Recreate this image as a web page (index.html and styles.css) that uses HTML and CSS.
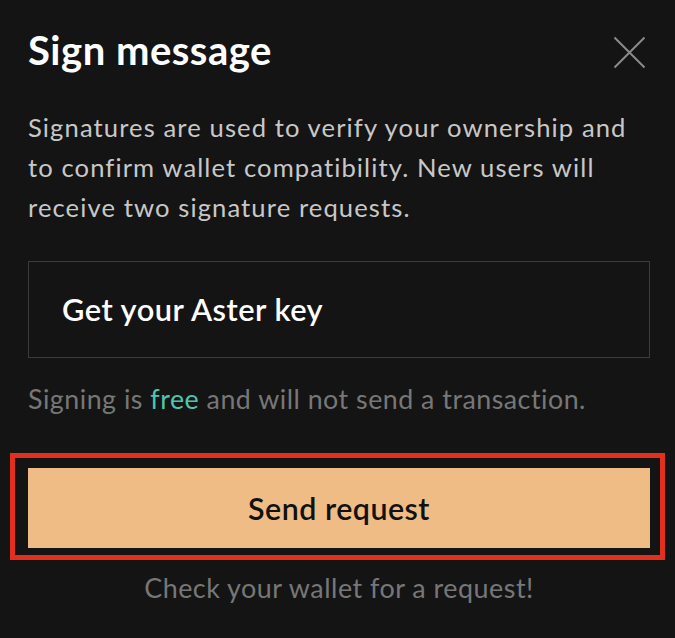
FILE: index.html
```html
<!DOCTYPE html>
<html>
<head>
<meta charset="utf-8">
<link rel="stylesheet" href="styles.css">
</head>
<body>
<div class="modal">
  <div class="header">
    <h1 class="title">Sign message</h1>
    <button class="close" aria-label="Close">
      <svg width="33" height="33" viewBox="0 0 33 33"><path d="M1.5 1.5 L31.5 31.5 M31.5 1.5 L1.5 31.5" stroke="#8a8a8a" stroke-width="2" fill="none"/></svg>
    </button>
  </div>
  <p class="desc">Signatures are used to verify your ownership and to confirm wallet compatibility. New users will receive two signature requests.</p>
  <div class="message">Get your Aster key</div>
  <p class="note">Signing is <span class="free">free</span> and will not send a transaction.</p>
  <div class="highlight">
    <button class="send">Send request</button>
  </div>
  <p class="check">Check your wallet for a request!</p>
</div>
</body>
</html>
```
FILE: styles.css
```css
html, body {
  margin: 0;
  padding: 0;
  background: #141414;
}
body {
  font-family: "Lato", "Noto Sans", sans-serif;
  letter-spacing: 0.5px;
  width: 675px;
  height: 638px;
  overflow: hidden;
}
.modal {
  padding: 26px 25px 0 28px;
}
.header {
  display: flex;
  justify-content: space-between;
  align-items: flex-start;
}
.title {
  margin: 0;
  font-size: 40px;
  line-height: 48px;
  font-weight: 700;
  color: #ffffff;
}
.close {
  background: none;
  border: 0;
  padding: 0;
  margin: 10px 4px 0 0;
  width: 33px;
  height: 33px;
}
.close svg { display: block; }
.desc {
  margin: 33px 0 0 0;
  max-width: 612px;
  font-size: 25.6px;
  letter-spacing: 1.1px;
  line-height: 40px;
  color: #c8c8c8;
}
.message {
  margin-top: 34px;
  width: 622px;
  height: 97px;
  box-sizing: border-box;
  border: 1px solid #3c3c3c;
  padding-left: 33px;
  display: flex;
  align-items: center;
  font-size: 30.8px;
  font-weight: 600;
  color: #ffffff;
}
.note {
  margin: 25px 0 0 0;
  font-size: 26.8px;
  line-height: 32px;
  color: #777777;
}
.free { color: #4cc7ae; }
.highlight {
  margin: 38px 0 0 -18px;
  width: 655px;
  box-sizing: border-box;
  border: 5px solid #e2301c;
  padding: 10px 10px 7px 13px;
}
.send {
  display: block;
  width: 622px;
  height: 80px;
  border: 0;
  padding: 0;
  background: #efbc86;
  font-family: inherit;
  letter-spacing: 0.5px;
  font-size: 30.4px;
  font-weight: 600;
  color: #111111;
}
.check {
  margin: 12px 0 0 0;
  width: 622px;
  text-align: center;
  font-size: 26.9px;
  line-height: 32px;
  color: #777777;
}
```
